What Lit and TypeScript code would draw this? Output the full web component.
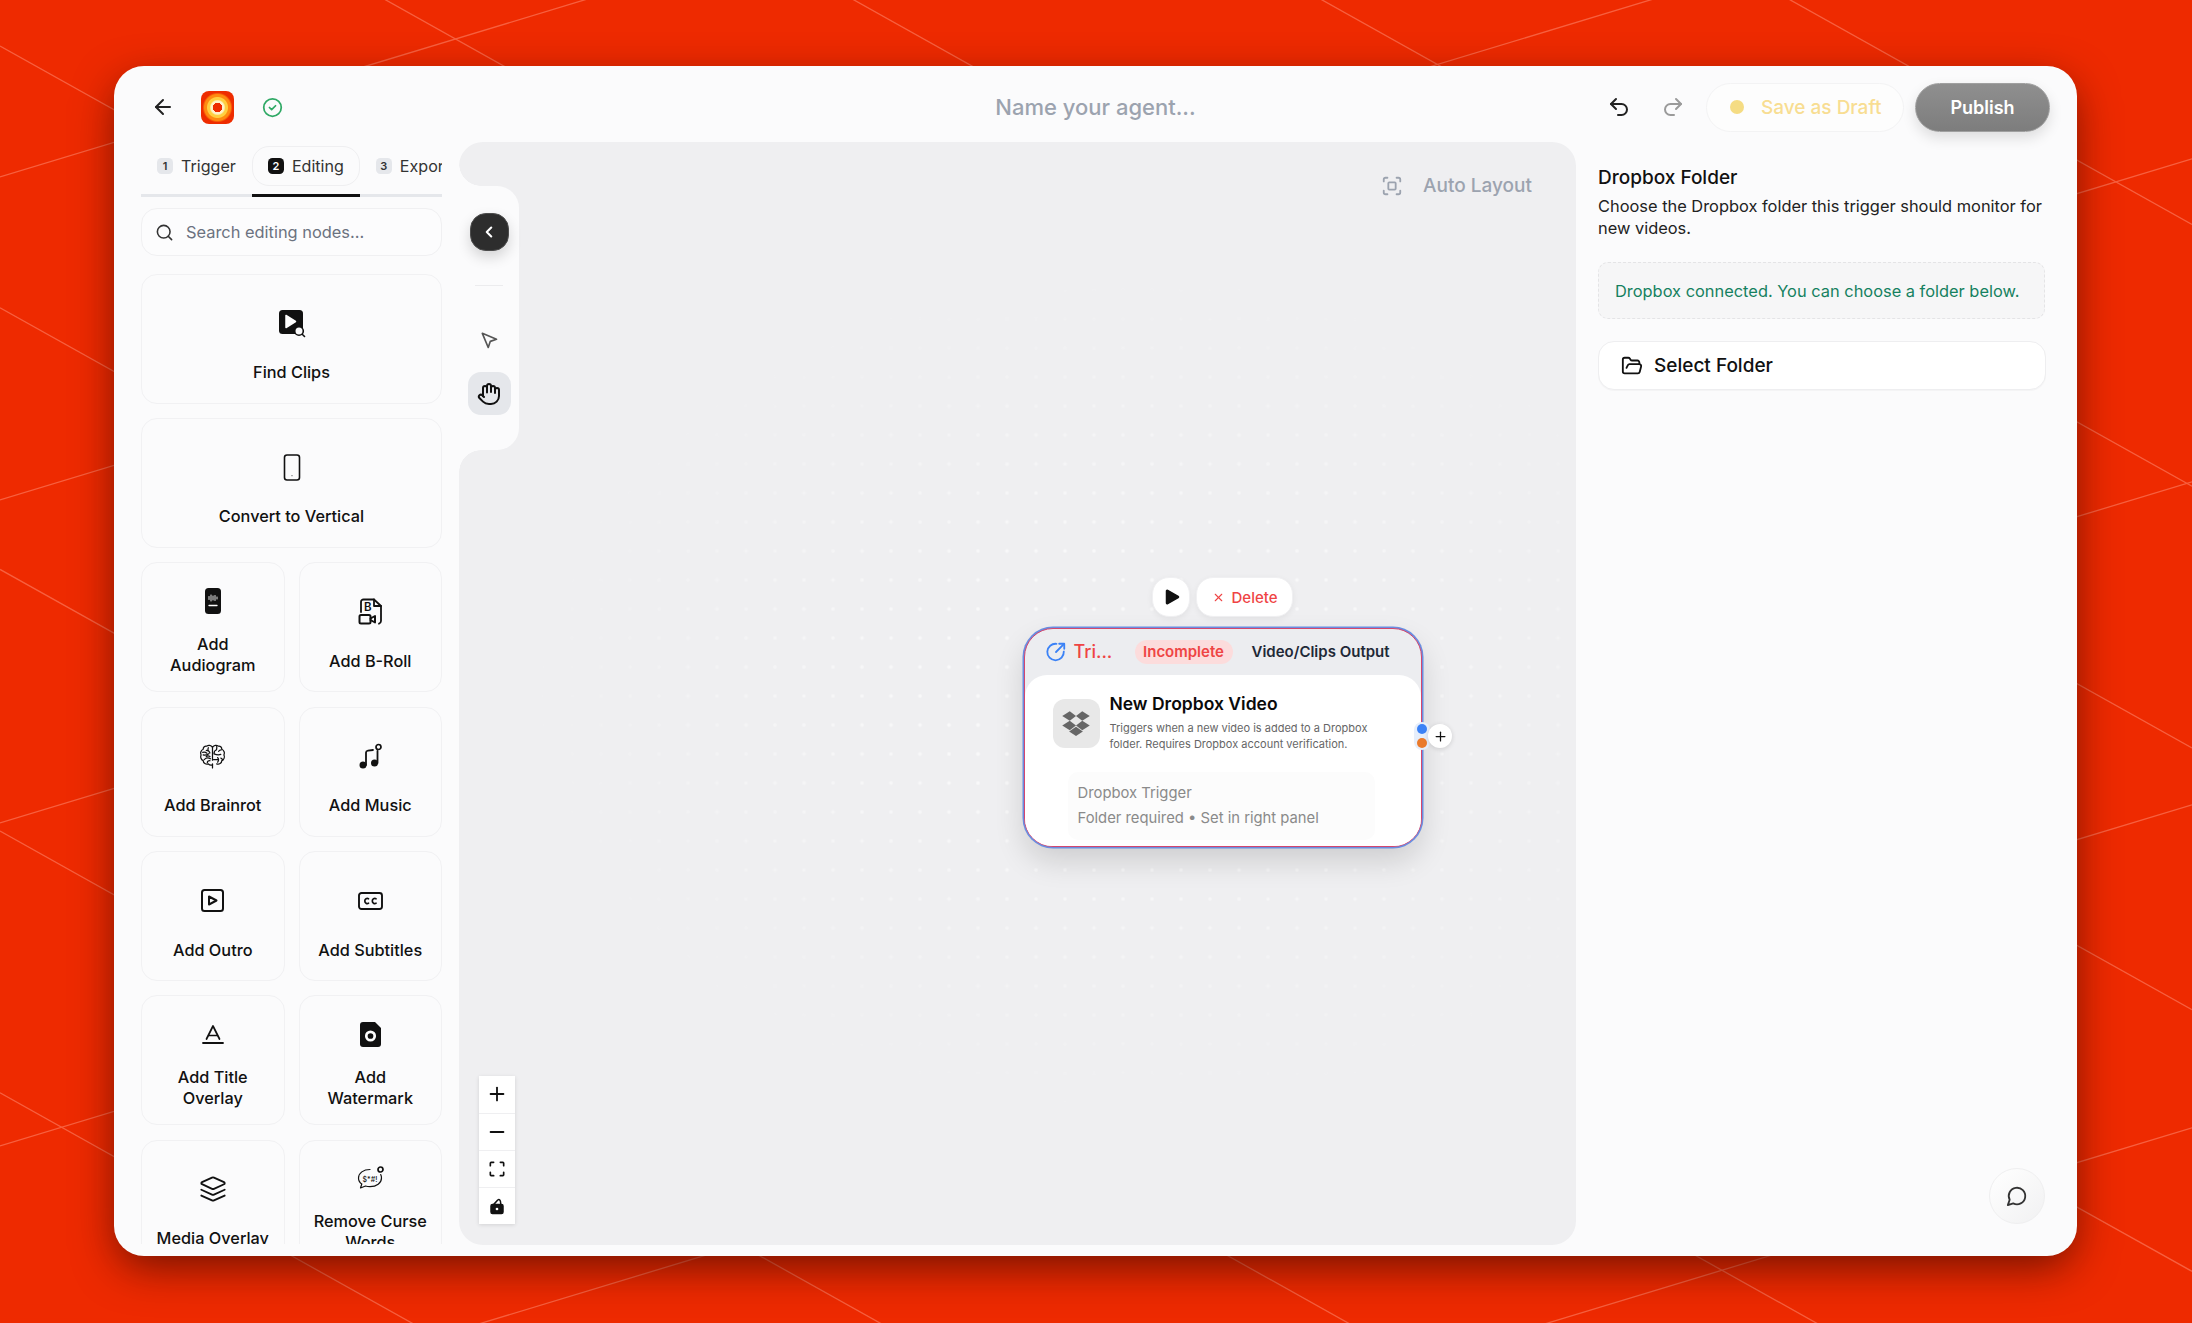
import { LitElement, html, css, svg } from "lit";
import { customElement } from "lit/decorators.js";

const ic = (w: number, h: number, vb: string, body: unknown, cls = "") => html`<svg class=${cls} width=${w} height=${h} viewBox=${vb} fill="none" stroke="currentColor" stroke-width="2" stroke-linecap="round" stroke-linejoin="round">${body}</svg>`;

const I = {
  back: svg`<path d="m12 19-7-7 7-7"/><path d="M19 12H5"/>`,
  check: svg`<circle cx="12" cy="12" r="10"/><path d="m8.5 12 2.5 2.5 4.5-4.5"/>`,
  undo: svg`<path d="M9 14 4 9l5-5"/><path d="M4 9h10.5a5.5 5.5 0 0 1 5.5 5.5a5.5 5.5 0 0 1-5.5 5.5H11"/>`,
  redo: svg`<path d="m15 14 5-5-5-5"/><path d="M20 9H9.5A5.5 5.5 0 0 0 4 14.5A5.5 5.5 0 0 0 9.5 20H13"/>`,
  search: svg`<circle cx="11" cy="11" r="8"/><path d="m21 21-4.3-4.3"/>`,
  chev: svg`<path d="m15 18-6-6 6-6" stroke-width="2.800"/>`,
  pointer: svg`<path d="m4 4 7.07 17 2.51-7.39L21 11.07z"/>`,
  hand: svg`<path d="M18 11V6a2 2 0 0 0-2-2a2 2 0 0 0-2 2"/><path d="M14 10V4a2 2 0 0 0-2-2a2 2 0 0 0-2 2v2"/><path d="M10 10.5V6a2 2 0 0 0-2-2a2 2 0 0 0-2 2v8"/><path d="M18 8a2 2 0 1 1 4 0v6a8 8 0 0 1-8 8h-2c-2.8 0-4.5-.86-5.99-2.34l-3.6-3.6a2 2 0 0 1 2.83-2.82L7 15"/>`,
  folder: svg`<path d="m6 14 1.5-2.9A2 2 0 0 1 9.24 10H20a2 2 0 0 1 1.94 2.5l-1.54 6a2 2 0 0 1-1.95 1.5H4a2 2 0 0 1-2-2V5a2 2 0 0 1 2-2h3.9a2 2 0 0 1 1.69.9l.81 1.2a2 2 0 0 0 1.67.9H18a2 2 0 0 1 2 2v2"/>`,
  chat: svg`<path d="M7.9 20A9 9 0 1 0 4 16.1L2 22Z"/>`,
  x: svg`<path d="M18 6 6 18"/><path d="m6 6 12 12"/>`,
  scan: svg`<path d="M3 7V5a2 2 0 0 1 2-2h2"/><path d="M17 3h2a2 2 0 0 1 2 2v2"/><path d="M21 17v2a2 2 0 0 1-2 2h-2"/><path d="M7 21H5a2 2 0 0 1-2-2v-2"/><rect x="8" y="8" width="8" height="8" rx="1"/>`,
  plus: svg`<path d="M5 12h14"/><path d="M12 5v14"/>`,
  minus: svg`<path d="M5 12h14"/>`,
  fit: svg`<path d="M4 8V5a1 1 0 0 1 1-1h3"/><path d="M16 4h3a1 1 0 0 1 1 1v3"/><path d="M20 16v3a1 1 0 0 1-1 1h-3"/><path d="M8 20H5a1 1 0 0 1-1-1v-3"/>`,
  lock: svg`<path d="M6 10h12a2 2 0 0 1 2 2v8a2 2 0 0 1-2 2H6a2 2 0 0 1-2-2v-8a2 2 0 0 1 2-2Z" fill="currentColor"/><path d="M8 9.5 13 4c1.5-1 3-.5 3.5 1.5L17 9"/><circle cx="12" cy="16" r="1.8" fill="#fff" stroke="none"/>`,
  play: svg`<path d="M6 4v16a1 1 0 0 0 1.500.86l14-8a1 1 0 0 0 0-1.720l-14-8A1 1 0 0 0 6 4Z" fill="currentColor"/>`,
  trig: svg`<path d="M20.5 11.5a9 9 0 1 1-8-8.4"/><path d="M12 12 20.5 3.5"/><path d="M15.5 3h5.5v5.500"/>`,
  dropbox: svg`<g fill="currentColor" stroke="none"><path d="M7 2.500 1 6.300l6 3.800 5-3.800z"/><path d="m17 2.500-5 3.800 5 3.800 6-3.800z"/><path d="m1 14 6 3.800 5-3.800-5-3.800z"/><path d="m17 10.200-5 3.800 5 3.800 6-3.800z"/><path d="m12 15-5.500 3.700 5.500 3.600 5.500-3.600z"/></g>`,
  findClips: svg`<rect x="1" y="1" width="24" height="24" rx="3.500" fill="currentColor" stroke="none"/><path d="M8 6.500v12l9.500-6z" fill="#fff" stroke="#fff" stroke-width="1.500"/><circle cx="21" cy="22" r="4.300" fill="#fbfbfc" stroke-width="1.600"/><path d="m24.200 25.200 2.300 2.300" stroke-width="1.600"/>`,
  phone: svg`<rect x="1.500" y="1" width="15" height="25" rx="2.500" stroke-width="1.600"/><path d="M9 21.700h.01" stroke-width="1"/>`,
  audiogram: svg`<rect x="1" y="1" width="16" height="26" rx="3.500" fill="currentColor" stroke="none"/><g stroke="#fff" stroke-width=".9"><path d="M5 9.500v3M7 8v6M9 9v4M11 8.500v5M13 10v2"/><path d="M5 18.500h8" stroke-width="1.300"/></g>`,
  broll: svg`<path d="M3 14V4a2.500 2.500 0 0 1 2.500-2.500H16l7 6.500V23a3 3 0 0 1-2 2.700" stroke-width="1.800"/><path d="M16 1.500V8h7" stroke-width="1.800"/><text x="6" y="13" font-size="11.500" font-weight="600" fill="currentColor" stroke="none" font-family="Inter">B</text><rect x="1.500" y="17" width="11" height="8.500" rx="1.500" stroke-width="2"/><path d="m12.500 20.500 4.500-2.500v6.500l-4.500-2.500" stroke-width="2"/>`,
  brain: svg`<g stroke-width="1.200"><path d="M14 5c-1.500-2-4-2.300-5.500-1C6.500 3.500 5 5 5 7 2.800 8 2 10.500 3 12.500c-1 2 0 4.500 2 5.500 .2 2.500 2.500 4 5 3.200 1.300 1.300 2.900 1.400 4 .8"/><path d="M14 5c1.500-2 4-2.300 5.500-1C21.500 3.500 23 5 23 7c2.200 1 3 3.500 2 5.500 1 2 0 4.500-2 5.500-.2 2.500-2.500 4-5 3.200"/><path d="M14 5v12.500M14 25v-4M8 8c1.500 0 3 .8 3.500 2.500M5 12.500c2 .5 4-.2 5.500-1.200M6 17c1.500-1.500 4-2 6-.8M18 7.500c-1.500.5-2.500 1.800-2.500 3.500M22 12c-2 .8-4 .5-6.500-.5M19 15c1 1.200 1 3 0 4.500M15 17h4M10 5.500c-.5 1-.5 2 0 3M4.500 10c1.500-.5 3-.2 4 .8M8 14c1-.8 2.500-.8 3.500 0M9 20c0-1.200 1-2 2.500-2M20 9c.5-1 1.500-1.500 2.500-1.500M22 15.500c1 .2 1.500 1 1.800 2M18 4.500c.3 1 .2 2-.3 3"/></g>`,
  music: svg`<circle cx="6" cy="22" r="3.500" fill="currentColor" stroke="none"/><circle cx="17.500" cy="20" r="3.500" fill="currentColor" stroke="none"/><path d="M9 22V9.500q0-1.500 2-1.800l5-.7M20.500 20V8" stroke-width="1.800"/><circle cx="21.500" cy="4" r="2.500" stroke-width="1.700"/>`,
  outro: svg`<rect x="1" y="1" width="21" height="21" rx="2.500" stroke-width="2" /><path d="M8 7.500v8l7.500-4z" stroke-width="2"/>`,
  cc: svg`<rect x="1" y="1" width="23" height="16" rx="2.500" stroke-width="1.900"/><path d="M10.500 6.800a2.500 2.500 0 1 0 0 4.400M18 6.800a2.500 2.500 0 1 0 0 4.400" stroke-width="1.700"/>`,
  title: svg`<path d="M1 19h20" stroke-width="1.800"/><path d="m4.500 15 6.500-13 6.500 13" stroke-width="1.700"/><path d="M7 11.500h8" stroke-width="1.700"/>`,
  watermark: svg`<path d="M4 1h12l6 6v16a3 3 0 0 1-3 3H4a3 3 0 0 1-3-3V4a3 3 0 0 1 3-3Z" fill="currentColor" stroke="none"/><circle cx="11.500" cy="15" r="4.200" stroke="#fff" stroke-width="2.700"/>`,
  layers: svg`<path d="m12.830 2.180a2 2 0 0 0-1.660 0L2.600 6.080a1 1 0 0 0 0 1.830l8.580 3.910a2 2 0 0 0 1.660 0l8.580-3.900a1 1 0 0 0 0-1.830Z" stroke-width="1.600"/><path d="m22 17.650-9.170 4.160a2 2 0 0 1-1.660 0L2 17.650" stroke-width="1.600"/><path d="m22 12.650-9.170 4.160a2 2 0 0 1-1.660 0L2 12.650" stroke-width="1.600"/>`,
  curse: svg`<path d="M14 4.500C7.500 4.500 2.500 8 2.500 13c0 2.500 1.200 4.600 3.300 6l-1.300 4 5-2c1.400.4 3 .6 4.500.6 6.500 0 11.500-3.600 11.500-8.600 0-1.200-.3-2.400-.8-3.400" stroke-width="1.200"/><text x="6.500" y="16.500" font-size="7" font-weight="500" fill="currentColor" stroke="none" font-family="Inter">$*#!</text><circle cx="24.500" cy="4.500" r="2.500" stroke-width="1.700"/>`,
};

type Card = { label: string; icon: unknown; w: number; h: number; vb?: string; wide?: boolean; two?: boolean };

const cards: Card[] = [
  { label: "Find Clips", icon: I.findClips, w: 28, h: 29, wide: true },
  { label: "Convert to Vertical", icon: I.phone, w: 18, h: 27, wide: true },
  { label: "Add Audiogram", icon: I.audiogram, w: 18, h: 28, two: true },
  { label: "Add B-Roll", icon: I.broll, w: 24, h: 27 },
  { label: "Add Brainrot", icon: I.brain, w: 29, h: 29, vb: "0 0 28 28" },
  { label: "Add Music", icon: I.music, w: 26, h: 26 },
  { label: "Add Outro", icon: I.outro, w: 23, h: 23 },
  { label: "Add Subtitles", icon: I.cc, w: 25, h: 18 },
  { label: "Add Title Overlay", icon: I.title, w: 22, h: 20, two: true },
  { label: "Add Watermark", icon: I.watermark, w: 23, h: 27, two: true },
  { label: "Media Overlay", icon: I.layers, w: 28, h: 28, vb: "0 0 24 24" },
  { label: "Remove Curse Words", icon: I.curse, w: 28, h: 27, two: true },
];

const lineA = Array.from({ length: 9 }, (_, k) => 46 + 261.7 * (k - 4));
const lineB = [177, 500, 823, 1146, 1469, 1792];

@customElement("app-root")
export class AppRoot extends LitElement {
  static styles = css`
    :host {
      display: block;
      position: relative;
      width: 100%;
      height: 100vh;
      box-sizing: border-box;
      padding: 66px 115px 67px 114px;
      background: #ee2a00;
      overflow: hidden;
      font-family: Inter, "Liberation Sans", sans-serif;
      color: #111;
    }
    * { box-sizing: border-box; }
    svg { display: block; flex: none; }
    .bg { position: absolute; inset: 0; width: 100%; height: 100%; }
    .bg line { stroke: #f7603f; stroke-width: 1.3; }
    .window {
      position: relative;
      height: 100%;
      background: #fbfbfc;
      border-radius: 30px;
      display: flex;
      flex-direction: column;
      box-shadow: 0 14px 44px -4px rgba(60, 8, 0, 0.72);
    }
    header {
      flex: none;
      height: 76px;
      padding: 6px 27px 0 27px;
      display: grid;
      grid-template-columns: 1fr auto 1fr;
      align-items: center;
    }
    .h-left, .h-right { display: flex; align-items: center; }
    .h-right { justify-content: flex-end; }
    .back { color: #222; margin: 0 26px 0 10px; }
    .logo {
      width: 33px; height: 33px; border-radius: 8px;
      background: radial-gradient(circle, #ee2c00 0 4.500px, #fff3c9 5px 6.500px, #ffcf3f 8px 10px, #ff8a10 11px 13px, #ee2c00 15px);
      margin-right: 28px;
    }
    .ok { color: #2fa965; }
    .name { font-size: 22px; font-weight: 500; color: #9ca3af; }
    .undo { color: #222; }
    .redo { color: #9a9a9a; margin-left: 30px; }
    .draft {
      margin-left: 21px; width: 198px; height: 49px; border-radius: 25px;
      border: 1px solid #f3f3f4; background: #fdfdfd;
      display: flex; align-items: center; padding-left: 23px; gap: 17px;
      font-size: 19px; font-weight: 500; color: #f8dd92;
    }
    .dot { width: 14px; height: 14px; border-radius: 50%; background: #f5dc83; }
    .publish {
      margin-left: 11px; width: 135px; height: 49px; border-radius: 25px;
      background: linear-gradient(#8f8f8f, #7d7d7d);
      border: 1px solid #a0a0a0;
      box-shadow: 0 6px 14px rgba(0, 0, 0, 0.12);
      color: #fff; font-size: 18px; font-weight: 600;
      display: flex; align-items: center; justify-content: center;
    }
    main {
      flex: 1; min-height: 0;
      display: flex;
      padding: 0 31px 11px 27px;
    }
    aside.side {
      flex: none; width: 301px; margin-right: 17px;
      display: flex; flex-direction: column; min-height: 0;
    }
    .tabs {
      flex: none; margin-top: 3px; height: 52px;
      display: flex; overflow: hidden;
      box-shadow: inset 0 -3px 0 #e5e7eb;
    }
    .tab {
      flex: none; height: 52px; padding: 1px 0 0;
      border-bottom: 3px solid transparent;
      font-size: 16.100px; color: #333;
    }
    .tab.on { border-bottom-color: #111; }
    .tab-in {
      height: 40px; padding: 0 15px 1px; border-radius: 17px;
      border: 1px solid transparent;
      display: flex; align-items: center; gap: 8px;
    }
    .tab.on .tab-in { border-color: #efeff1; }
    .num {
      width: 16px; height: 16px; border-radius: 4.500px; background: #e5e7eb;
      font-size: 11px; font-weight: 600; color: #333;
      display: flex; align-items: center; justify-content: center;
    }
    .tab.on .num { background: #111; color: #fff; }
    .search {
      flex: none; margin-top: 11px; height: 48px; border-radius: 16px;
      border: 1px solid #f0f0f2; background: #fcfcfd;
      display: flex; align-items: center; padding-left: 13px; gap: 12px;
      font-size: 16.400px; color: #6b7280;
    }
    .search svg { color: #333; }
    .list {
      margin: 17.500px 0 1px; flex: 1; min-height: 0; overflow: hidden;
      display: grid; grid-template-columns: 1fr 1fr;
      gap: 14.400px 14px; align-content: start;
    }
    .card {
      height: 130px; border-radius: 16px; border: 1px solid #f1f1f3;
      background: #fbfbfc;
      display: flex; flex-direction: column; align-items: center; justify-content: center;
      text-align: center; gap: 10px; padding: 0 12px;
      font-size: 16.300px; line-height: 21px; font-weight: 500; color: #111;
    }
    .card.wide { grid-column: 1 / -1; }
    .art { flex: none; height: 58px; display: flex; align-items: center; justify-content: center; }
    .card.two .art { height: 45px; }
    .canvas {
      position: relative; flex: none; width: 1117px; margin-right: 22px;
      background: #efeff1; border-radius: 24px; overflow: hidden;
    }
    .dots {
      position: absolute; inset: 0;
      background-image: radial-gradient(circle, #fff 0 1.600px, transparent 2.200px);
      background-size: 29px 29px;
      background-position: 11.500px -11.500px;
      -webkit-mask-image: radial-gradient(ellipse 600px 420px at 60% 50%, #000 30%, transparent 100%);
      mask-image: radial-gradient(ellipse 600px 420px at 60% 50%, #000 30%, transparent 100%);
      opacity: 0.6;
    }
    .tool {
      position: absolute; left: 0; top: 44px; width: 60px; height: 264px;
      background: #fbfbfc; border-radius: 0 22px 22px 0;
      display: flex; flex-direction: column; align-items: center; padding-top: 27px;
    }
    .tool::before, .tool::after {
      content: ""; position: absolute; left: 0; width: 22px; height: 22px;
    }
    .tool::before { top: -22px; background: radial-gradient(circle at 100% 0, transparent 21.500px, #fbfbfc 22px); }
    .tool::after { bottom: -22px; background: radial-gradient(circle at 100% 100%, transparent 21.500px, #fbfbfc 22px); }
    .collapse {
      width: 39px; height: 38px; border-radius: 16px;
      background: #2d2d2d; border: 1px solid #4c4c4c; color: #fff;
      display: flex; align-items: center; justify-content: center;
      box-shadow: 0 6px 14px rgba(0, 0, 0, 0.16);
    }
    .tool hr { width: 28px; height: 1px; margin: 34px 0 0; border: 0; background: #ececee; }
    .pointer { margin-top: 44px; color: #555; }
    .handbtn {
      margin-top: 22px; width: 43px; height: 43px; border-radius: 13px; background: #e5e7eb;
      display: flex; align-items: center; justify-content: center; color: #111;
    }
    .auto {
      position: absolute; right: 44px; top: 32px;
      display: flex; align-items: center; gap: 20px;
      font-size: 19px; font-weight: 500; color: #9ca3af;
    }
    .zoom {
      position: absolute; left: 20px; top: 933.500px; width: 36px;
      background: #fff; box-shadow: 0 1px 4px rgba(0, 0, 0, 0.12);
      display: flex; flex-direction: column;
    }
    .zoom div {
      height: 37px; display: flex; align-items: center; justify-content: center; color: #111;
      border-top: 1px solid #efeff1;
    }
    .zoom div:first-child { border-top: 0; }
    .acts { position: absolute; left: 693px; top: 435px; display: flex; gap: 6px; }
    .act {
      height: 40px; border-radius: 17px; background: #fff; border: 1px solid #f0f0f2;
      box-shadow: 0 2px 6px rgba(0, 0, 0, 0.06);
      display: flex; align-items: center; justify-content: center;
    }
    .act.play { width: 38px; color: #111; }
    .act.del { width: 97px; gap: 7px; color: #ef4444; font-size: 15px; font-weight: 500; }
    .node {
      position: absolute; left: 564.500px; top: 485.500px; width: 398px; height: 219px;
      border: 1.500px solid #d4476e; border-radius: 29px;
      box-shadow: 0 0 0 1.500px #6a8de0, 0 14px 30px rgba(0, 0, 0, 0.14);
      background: #ecedf0;
      display: flex; flex-direction: column;
    }
    .n-head {
      flex: none; height: 46px; padding-left: 20px;
      display: flex; align-items: center;
    }
    .n-head svg { color: #3b82f6; }
    .tri { margin-left: 7px; width: 36px; font-size: 18px; font-weight: 500; color: #ef4444; white-space: nowrap; }
    .inc {
      margin-left: 25px; width: 98px; height: 24px; border-radius: 12px; background: #fcdcdc;
      color: #ef4444; font-size: 15px; font-weight: 600;
      display: flex; align-items: center; justify-content: center;
    }
    .out { margin-left: 19px; font-size: 15px; font-weight: 600; color: #1f2937; white-space: nowrap; }
    .n-body {
      flex: 1; background: #fff; border-radius: 22px 22px 27px 27px; padding: 24px 0 0 28px;
    }
    .n-top { display: flex; gap: 10px; }
    .n-ico {
      width: 47px; height: 49px; border-radius: 12px; background: #e8e8e8; color: #666;
      display: flex; align-items: center; justify-content: center; flex: none;
    }
    .n-title { font-size: 17.500px; font-weight: 600; line-height: 22px; margin-top: -6px; color: #0a0a0a; }
    .n-desc { font-size: 11px; line-height: 16px; color: #666; margin-top: 5px; width: 270px; }
    .n-info {
      margin: 20px 0 0 15px; width: 307px; height: 68px; background: #fcfcfc; border-radius: 10px;
      padding: 9px 0 0 10px; font-size: 14.800px; line-height: 25px; color: #8a8a8a;
    }
    .ports {
      position: absolute; left: 955px; top: 580px; width: 16px; height: 28px; border-radius: 8px;
      background: #e6eefb; display: flex; flex-direction: column; align-items: center; justify-content: center; gap: 4px;
    }
    .ports i { width: 10px; height: 10px; border-radius: 50%; }
    .addp {
      position: absolute; left: 969px; top: 582px; width: 24px; height: 24px; border-radius: 50%;
      background: #fff; box-shadow: 0 1px 5px rgba(0, 0, 0, 0.14); color: #111;
      display: flex; align-items: center; justify-content: center;
    }
    aside.right { flex: 1; min-width: 0; padding-top: 25px; }
    .r-title { font-size: 19px; line-height: 22px; font-weight: 500; color: #111; }
    .r-desc { margin-top: 6px; font-size: 16.400px; line-height: 22px; color: #222; }
    .r-note {
      margin-top: 23px; height: 57px; margin-right: 1px; border: 1px dashed #e4e4e6; border-radius: 10px; background: #f6f6f7;
      padding-left: 16px; display: flex; align-items: center; font-size: 16.400px; color: #15815f;
    }
    .r-btn {
      margin-top: 22px; height: 49px; border-radius: 16px; border: 1px solid #eeeef0;
      background: #fff; box-shadow: 0 1px 1px rgba(0, 0, 0, 0.03);
      display: flex; align-items: center; padding-left: 22px; gap: 11px;
      font-size: 19px; font-weight: 500; color: #111;
    }
    .chat {
      position: absolute; right: 32px; bottom: 32px; width: 56px; height: 56px; border-radius: 50%;
      background: linear-gradient(135deg, #fff, #f1f1f2); border: 1.500px solid #efeff0; color: #333;
      display: flex; align-items: center; justify-content: center;
    }
  `;

  render() {
    const tabs = [["1", "Trigger"], ["2", "Editing"], ["3", "Export"]];
    return html`
      <svg class="bg" viewBox="0 0 2192 1323" preserveAspectRatio="none">
        ${lineA.map((c) => svg`<line x1="0" y1=${c} x2="2192" y2=${c + 0.559 * 2192}></line>`)}
        ${lineB.map((c) => svg`<line x1="0" y1=${c} x2="2192" y2=${c - 0.303 * 2192}></line>`)}
      </svg>
      <div class="window">
        <header>
          <div class="h-left">
            <div class="back">${ic(24, 24, "0 0 24 24", I.back)}</div>
            <div class="logo"></div>
            <div class="ok">${ic(21, 21, "0 0 24 24", I.check)}</div>
          </div>
          <div class="name">Name your agent...</div>
          <div class="h-right">
            <div class="undo">${ic(24, 24, "0 0 24 24", I.undo)}</div>
            <div class="redo">${ic(24, 24, "0 0 24 24", I.redo)}</div>
            <div class="draft"><span class="dot"></span>Save as Draft</div>
            <div class="publish">Publish</div>
          </div>
        </header>
        <main>
          <aside class="side">
            <div class="tabs">
              ${tabs.map(([n, t]) => html`
                <div class="tab ${n === "2" ? "on" : ""}"><div class="tab-in"><span class="num">${n}</span>${t}</div></div>`)}
            </div>
            <div class="search">${ic(19, 19, "0 0 24 24", I.search)}Search editing nodes...</div>
            <div class="list">
              ${cards.map((c) => html`
                <div class="card ${c.wide ? "wide" : ""} ${c.two ? "two" : ""}">
                  <div class="art">${ic(c.w, c.h, c.vb ?? `0 0 ${c.w} ${c.h}`, c.icon)}</div>
                  <div>${c.label}</div>
                </div>`)}
            </div>
          </aside>
          <section class="canvas">
            <div class="dots"></div>
            <div class="tool">
              <div class="collapse">${ic(18, 18, "0 0 24 24", I.chev)}</div>
              <hr />
              <div class="pointer">${ic(20, 20, "0 0 24 24", I.pointer)}</div>
              <div class="handbtn">${ic(24, 24, "0 0 24 24", I.hand)}</div>
            </div>
            <div class="auto">${ic(22, 22, "0 0 24 24", I.scan)}Auto Layout</div>
            <div class="zoom">
              <div>${ic(22, 22, "0 0 24 24", I.plus)}</div>
              <div>${ic(22, 22, "0 0 24 24", I.minus)}</div>
              <div>${ic(20, 20, "0 0 24 24", I.fit)}</div>
              <div>${ic(18, 18, "0 0 24 24", I.lock)}</div>
            </div>
            <div class="acts">
              <div class="act play">${ic(18, 18, "0 0 24 24", I.play)}</div>
              <div class="act del">${ic(13, 13, "0 0 24 24", I.x)}Delete</div>
            </div>
            <div class="node">
              <div class="n-head">
                ${ic(22, 22, "0 0 24 24", I.trig)}
                <span class="tri">Tri...</span>
                <span class="inc">Incomplete</span>
                <span class="out">Video/Clips Output</span>
              </div>
              <div class="n-body">
                <div class="n-top">
                  <div class="n-ico">${ic(30, 30, "0 0 24 24", I.dropbox)}</div>
                  <div>
                    <div class="n-title">New Dropbox Video</div>
                    <div class="n-desc">Triggers when a new video is added to a Dropbox folder. Requires Dropbox account verification.</div>
                  </div>
                </div>
                <div class="n-info">Dropbox Trigger<br />Folder required • Set in right panel</div>
              </div>
            </div>
            <div class="ports"><i style="background:#3b82f6"></i><i style="background:#ea7a2b"></i></div>
            <div class="addp">${ic(15, 15, "0 0 24 24", I.plus)}</div>
          </section>
          <aside class="right">
            <div class="r-title">Dropbox Folder</div>
            <div class="r-desc">Choose the Dropbox folder this trigger should monitor for new videos.</div>
            <div class="r-note">Dropbox connected. You can choose a folder below.</div>
            <div class="r-btn">${ic(22, 22, "0 0 24 24", I.folder)}Select Folder</div>
          </aside>
        </main>
        <div class="chat">${ic(22, 22, "0 0 24 24", I.chat)}</div>
      </div>
    `;
  }
}
